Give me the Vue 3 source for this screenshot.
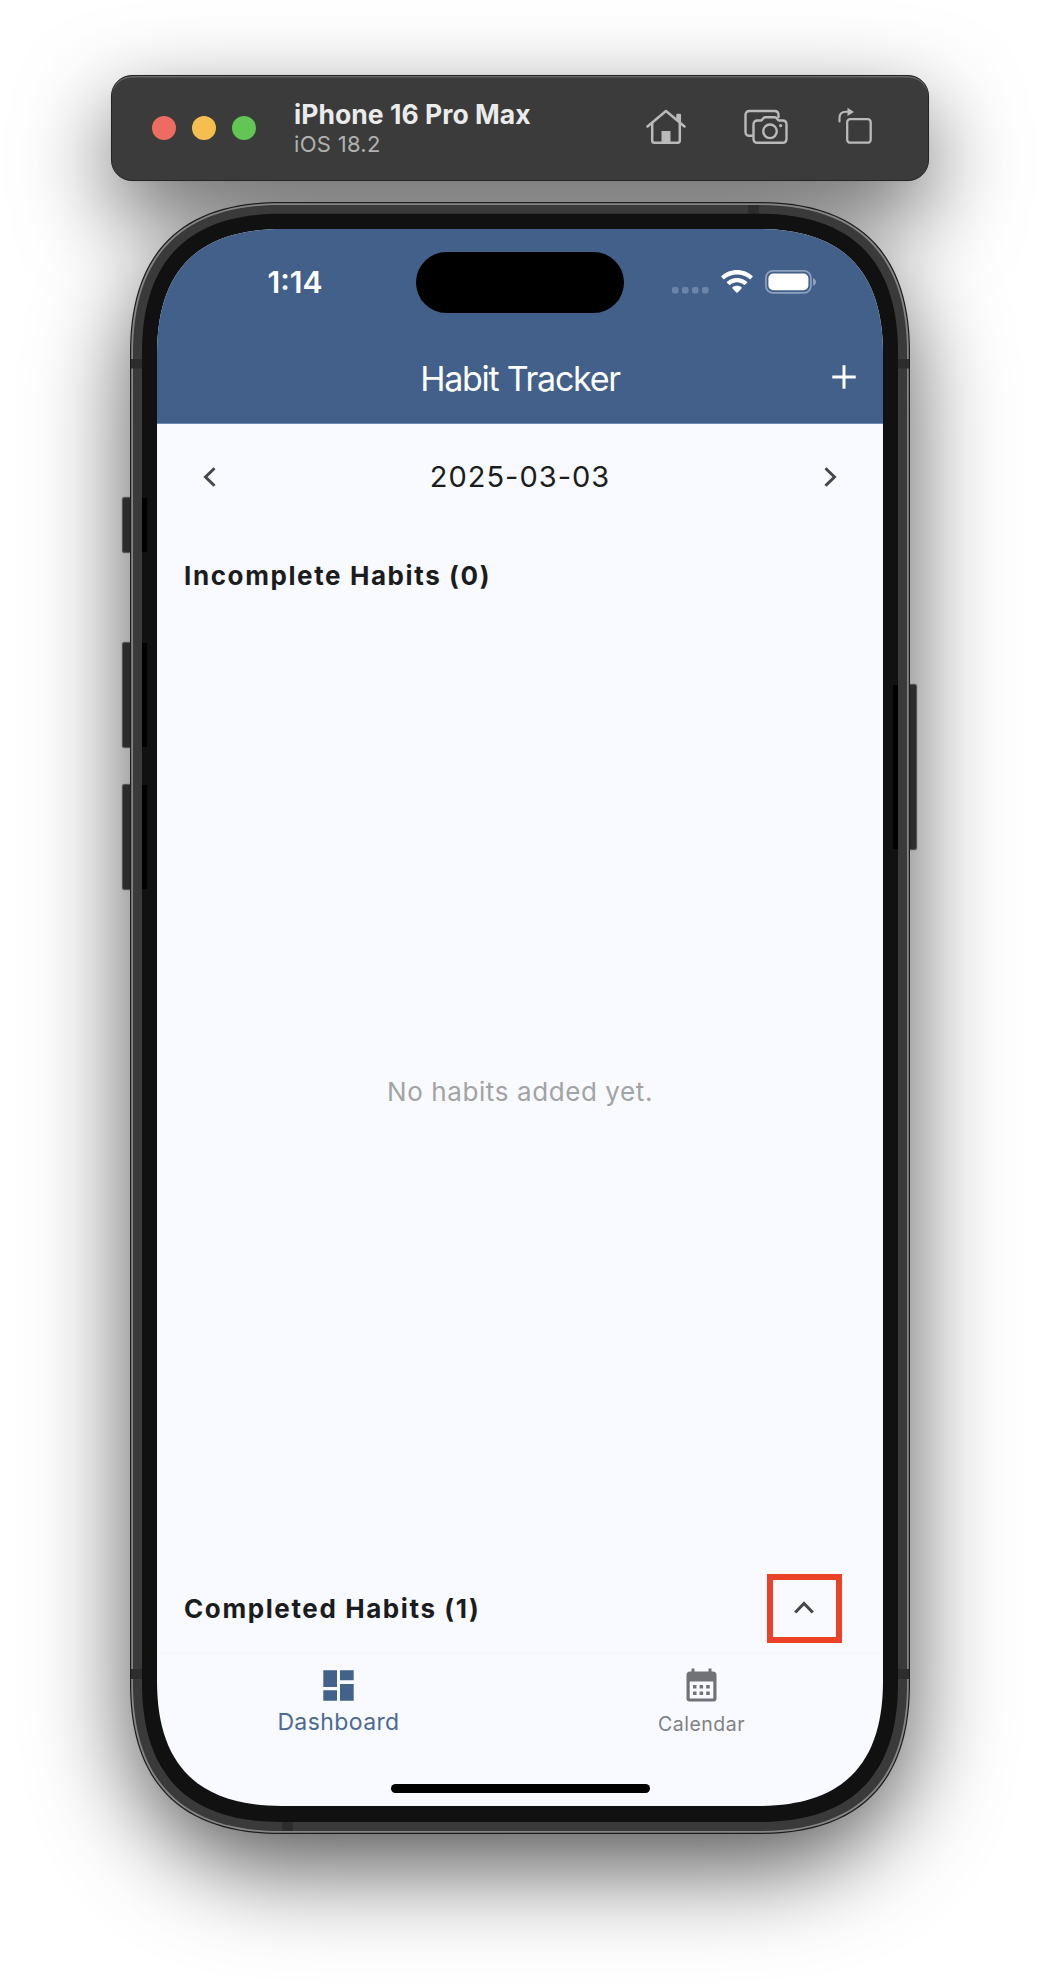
<script setup>
// Device outline with softened corners; `inset` is the distance from the outer edge.
function outline(x, y, w, h, inset) {
  const e = 150 - (25 / 27) * inset
  const c = 51 - (10 / 27) * inset
  const r = x + w
  const b = y + h
  return `M${x + e} ${y} L${r - e} ${y} C${r - c} ${y} ${r} ${y + c} ${r} ${y + e} L${r} ${b - e} C${r} ${b - c} ${r - c} ${b} ${r - e} ${b} L${x + e} ${b} C${x + c} ${b} ${x} ${b - c} ${x} ${b - e} L${x} ${y + e} C${x} ${y + c} ${x + c} ${y} ${x + e} ${y} Z`
}
const outer = outline(0, 0, 780, 1632, 0)
const rim = outline(1.2, 1.2, 777.6, 1629.6, 1.2)
const band = outline(3, 3, 774, 1626, 3)
const bezel = outline(12, 11.7, 756, 1608.3, 12)
const displayClip = { clipPath: `path('${outline(0, 0, 726, 1577, 27)}')` }
const keys = [
  { side: 'left', top: 295, height: 56 },
  { side: 'left', top: 440, height: 106 },
  { side: 'left', top: 582, height: 106 },
  { side: 'right', top: 482, height: 166 }
]
const tabs = [
  { name: 'Dashboard', active: true },
  { name: 'Calendar', active: false }
]
</script>

<template>
  <main class="stage">
    <header class="toolbar">
      <div class="lights"><i class="red"></i><i class="yellow"></i><i class="green"></i></div>
      <div class="device-name">
        <strong>iPhone 16 Pro Max</strong>
        <span>iOS 18.2</span>
      </div>
      <div class="tools">
        <svg class="t-home" width="40" height="36" viewBox="0 0 40 36" fill="none" stroke="#b9bab9" stroke-width="2.5" stroke-linecap="round" stroke-linejoin="round">
          <path d="M1.500 17.500 20 2l18.500 15.500" />
          <path d="M6.200 14v17.500q0 2.300 2.300 2.300h23q2.300 0 2.300-2.300V14" />
          <path d="M31.500 11V6h2.300v7" />
          <path d="M15.500 22h9v11.500h-9z" fill="#b9bab9" stroke="none" />
        </svg>
        <svg class="t-camera" width="44" height="36" viewBox="0 0 44 36" fill="none" stroke="#b9bab9" stroke-width="2.400" stroke-linejoin="round" stroke-linecap="round">
          <path d="M8 26.800H5.500Q1.500 26.800 1.500 23V6Q1.500 2 5.500 2h25q4 0 4 4v2" />
          <path d="M13.500 11.500h3q1 0 1.600-.8l1.200-1.500Q20.200 8.200 21.500 8.200h9q1.300 0 2.200 1l1.200 1.500q.6.800 1.600.800h3Q42.500 11.500 42.500 15.500v14.300q0 4-4 4h-25q-4 0-4-4V15.500q0-4 4-4z" />
          <circle cx="26" cy="22.300" r="6.800" />
          <circle cx="36.600" cy="16.600" r="1.600" fill="#b9bab9" stroke="none" />
        </svg>
        <svg class="t-rotate" width="34" height="37" viewBox="0 0 34 37" fill="none" stroke="#b9bab9" stroke-width="2.300" stroke-linecap="round">
          <rect x="9.200" y="12.200" width="23.500" height="23.500" rx="3" />
          <path d="M1.500 14.500V11q0-6.200 6.500-6.200h2.500" stroke-width="2.100" />
          <path d="M9.500.800 16 4.900 9.500 9z" fill="#b9bab9" stroke="none" />
        </svg>
      </div>
    </header>

    <section class="phone">
      <i v-for="k in keys" :key="k.top" class="key" :class="k.side" :style="{ top: k.top + 'px', height: k.height + 'px' }"></i>
      <svg class="body" width="780" height="1632" viewBox="0 0 780 1632">
        <path :d="outer" fill="#1c1c1c" />
        <path :d="rim" fill="#858585" />
        <path :d="band" fill="#3a3a3a" />
        <path fill="#2d2d2d" d="M618 3h11v10h-11zM152 1619h11v10h-11zM1 157h11v9.500H1zM768 157h11v9.500h-11zM1 1467h11v10H1zM768 1467h11v10h-11z" />
        <path :d="bezel" fill="#111" />
        <g fill="#000">
          <rect v-for="k in keys" :key="k.top" :x="k.side === 'left' ? 12 : 763" :y="k.top + 1" width="5" :height="k.height - 2" />
        </g>
      </svg>

      <div class="display" :style="displayClip">
        <div class="bluebar">
          <div class="status">
            <span class="clock">1:14</span>
            <span class="island"></span>
            <span class="signals">
              <svg width="37" height="7" viewBox="0 0 37 7" fill="#6c84a9"><rect x="0" width="6.500" height="6.500" rx="2" /><rect x="10" width="6.500" height="6.500" rx="2" /><rect x="20" width="6.500" height="6.500" rx="2" /><rect x="30" width="6.500" height="6.500" rx="2" /></svg>
              <svg class="wifi" width="32" height="24" viewBox="0 0 32 24" fill="#fff">
                <path d="M16 0C22 0 27.500 2.300 31.500 6.100Q32 6.600 31.500 7.100L29.600 9Q29 9.500 28.500 9C25 6 20.800 4.400 16 4.400S7 6 3.500 9Q3 9.500 2.400 9L.5 7.100Q0 6.600.5 6.100C4.500 2.300 10 0 16 0z" />
                <path d="M16 7.900c3.900 0 7.300 1.400 10 3.800q.6.500 0 1.100l-2 2q-.5.500-1.100 0C21 13.200 18.700 12.300 16 12.300s-5 .9-6.900 2.500q-.6.500-1.100 0l-2-2q-.6-.6 0-1.100C8.700 9.300 12.100 7.900 16 7.900z" />
                <path d="M16 15.800c1.800 0 3.300.5 4.500 1.500q.6.500 0 1.100l-3.900 4.100q-.6.500-1.200 0l-3.900-4.100q-.6-.6 0-1.100c1.200-1 2.700-1.500 4.500-1.500z" />
              </svg>
              <svg width="52" height="24" viewBox="0 0 52 24">
                <rect x=".9" y=".9" width="45" height="22" rx="7" fill="none" stroke="#8ea1be" stroke-width="1.700" />
                <rect x="3.400" y="3.600" width="40" height="16.600" rx="5" fill="#fff" />
                <path d="M48 8.200q3 1 3 3.800t-3 3.800z" fill="#8ea1be" />
              </svg>
            </span>
          </div>
          <div class="navbar">
            <h1>Habit Tracker</h1>
            <svg class="plus" width="24" height="24" viewBox="0 0 24 24" fill="none" stroke="#fff" stroke-width="3"><path d="M12 .3v23.400M.3 12h23.400" /></svg>
          </div>
        </div>

        <div class="datebar">
          <svg width="14" height="20" viewBox="0 0 14 20" fill="none" stroke="#46474c" stroke-width="3"><path d="M11.500 1.200 2.500 10l9 8.800" /></svg>
          <span>2025-03-03</span>
          <svg width="14" height="20" viewBox="0 0 14 20" fill="none" stroke="#46474c" stroke-width="3"><path d="m2.500 1.200 9 8.800-9 8.800" /></svg>
        </div>

        <h2 class="incomplete">Incomplete Habits (0)</h2>
        <div class="empty"><span>No habits added yet.</span></div>
        <div class="completed">
          <h2>Completed Habits (1)</h2>
          <button type="button" class="expand" aria-label="Expand">
            <svg width="20" height="14" viewBox="0 0 20 14" fill="none" stroke="#46474c" stroke-width="3"><path d="m1.200 11.500 8.800-9 8.800 9" /></svg>
          </button>
        </div>

        <nav class="tabs">
          <a v-for="t in tabs" :key="t.name" class="tab" :class="{ active: t.active }">
            <svg v-if="t.active" width="31" height="31" viewBox="0 0 31 31" fill="#42618b"><path d="M.3.300h13.700v16.700H.3zM17 .3h13.700v10H17zM.3 20.300h13.700v10.400H.3zM17 14h13.700v16.700H17z" /></svg>
            <svg v-else width="31" height="34" viewBox="0 0 31 34">
              <path fill="#717275" fill-rule="evenodd" d="M5.500.5h3v3h14v-3h3v3h1.500q3.500 0 3.500 3.500v23.500q0 3-3 3H3.500q-3 0-3-3V7Q.5 3.500 4 3.500h1.500zM3.700 13.500v17h23.600v-17z" />
              <path fill="#717275" d="M7 17h3.500v3.500H7zM13.600 17h3.500v3.500h-3.500zM20.200 17h3.500v3.500h-3.500zM7 23.500h3.500V27H7zM13.600 23.500h3.500V27h-3.500zM20.200 23.500h3.500V27h-3.500z" />
            </svg>
            <span>{{ t.name }}</span>
          </a>
        </nav>
        <div class="home-indicator"></div>
      </div>
    </section>
  </main>
</template>

<style>
body { margin: 0; background: #fff; }
</style>

<style scoped>
.stage { isolation: isolate; box-sizing: border-box; width: 1040px; height: 1984px; padding-top: 75px; display: flex; flex-direction: column; align-items: center; gap: 21px; overflow: hidden; background: #fff; font-family: Inter, "Liberation Sans", sans-serif; }
.toolbar { position: relative; box-sizing: border-box; width: 818px; height: 106px; flex: none; border: 1px solid #232423; border-radius: 21px; background: #3a3b3a; box-shadow: inset 0 1.500px 0 #666766; display: flex; align-items: center; padding: 0 56px 0 40px; }
.toolbar::before { content: ""; position: absolute; inset: 0; z-index: -1; border-radius: 21px; box-shadow: 0 34px 92px rgba(0, 0, 0, .62), 0 0 3px rgba(0, 0, 0, .2); }
.lights { display: flex; gap: 16px; }
.lights i { width: 24px; height: 24px; border-radius: 50%; }
.red { background: #ed6b60; }
.yellow { background: #f5bf50; }
.green { background: #62c655; }
.device-name { display: flex; flex-direction: column; margin-left: 38px; margin-top: 1px; }
.device-name strong { font-size: 26.500px; line-height: 31px; font-weight: 700; color: #ebebeb; letter-spacing: .05px; white-space: nowrap; }
.device-name span { font-size: 22px; line-height: 28px; color: #b0b1b0; letter-spacing: .3px; }
.tools { margin-left: auto; margin-top: -2px; display: flex; align-items: center; }
.t-camera { margin-left: 58px; }
.t-rotate { margin-left: 50px; margin-top: -4px; }
.phone { position: relative; box-sizing: border-box; width: 780px; height: 1632px; flex: none; padding: 27px; }
.phone::before { content: ""; position: absolute; inset: 1px; z-index: -1; border-radius: 146px; box-shadow: 0 34px 96px rgba(0, 0, 0, .67); }
.body { position: absolute; left: 0; top: 0; }
.key { position: absolute; box-sizing: border-box; width: 20px; background: #2c2c2c; border: 1.500px solid #555; border-radius: 3px; box-shadow: 0 0 1px #333; }
.key.left { left: -8px; }
.key.right { right: -7px; }
.display { position: relative; width: 726px; height: 1577px; display: flex; flex-direction: column; background: #f8faff; color: #1b1c20; }
.bluebar { box-sizing: border-box; height: 195px; background: #42608a; border-bottom: 1px solid #7189ae; }
.status { display: grid; grid-template-columns: 1fr 208px 1fr; align-items: center; height: 61px; padding-top: 23px; }
.clock { font-size: 30px; font-weight: 600; color: #fff; justify-self: center; padding-left: 17px; padding-bottom: 1px; letter-spacing: 0; }
.island { height: 61px; border-radius: 31px; background: #000; }
.signals { display: flex; align-items: center; padding-left: 48px; padding-bottom: 1px; }
.signals svg:first-child { margin-top: 17px; }
.wifi { margin: 0 12px; }
.navbar { box-sizing: border-box; display: grid; grid-template-columns: 1fr auto 1fr; align-items: center; height: 110px; padding-top: 22px; }
h1 { grid-column: 2; margin: 0; padding-bottom: 1px; font-size: 34px; line-height: 42px; font-weight: 400; letter-spacing: -1.250px; color: #fff; }
.plus { justify-self: end; margin-right: 27px; margin-top: -4px; }
.datebar { display: flex; align-items: center; justify-content: space-between; height: 105px; padding: 0 46px; font-size: 29px; letter-spacing: 1px; }
.datebar span { padding-bottom: 1px; }
h2 { margin: 0; font-size: 26px; line-height: 32px; font-weight: 700; letter-spacing: 1.600px; white-space: nowrap; }
.incomplete { padding: 31px 27px 0; }
.empty { flex: 1; display: flex; justify-content: center; align-items: center; font-size: 26px; letter-spacing: .600px; color: #a2a3a4; padding-top: 16px; }
.completed { display: flex; justify-content: space-between; align-items: center; height: 69px; padding: 0 41px 9px 27px; }
.expand { box-sizing: border-box; width: 75px; height: 69px; padding: 0 2px 2px 0; border: 6px solid #ea4127; background: transparent; display: grid; place-items: center; }
.tabs { box-sizing: border-box; height: 154px; border-top: 2px solid #f6f7fb; display: grid; grid-template-columns: 1fr 1fr; }
.tab { display: flex; flex-direction: column; align-items: center; padding-top: 14px; gap: 10px; font-size: 19.500px; line-height: 24px; letter-spacing: .500px; color: #808184; }
.tab.active { padding-top: 16px; gap: 7px; font-size: 23px; line-height: 28px; letter-spacing: .400px; color: #4c6993; }
.home-indicator { position: absolute; left: 234px; bottom: 13px; width: 259px; height: 9px; border-radius: 5px; background: #000; }
</style>
